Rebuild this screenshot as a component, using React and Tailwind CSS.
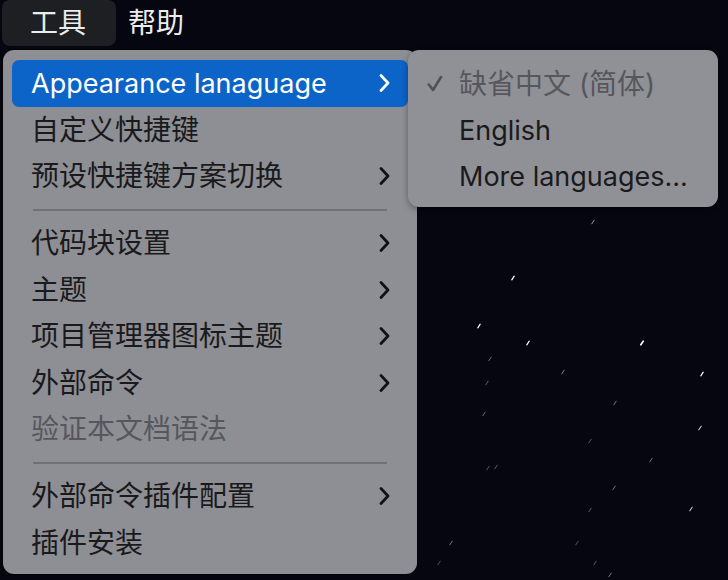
import React from "react";

const FONT = { fontFamily: '"Inter", "Noto Sans CJK SC", sans-serif' };

function Chevron({ color = "#1b1b1d" }) {
  return (
    <svg width="12" height="18" viewBox="0 0 12 18" className="shrink-0">
      <polyline points="3,1.5 10,9 3,16.5" fill="none" stroke={color} strokeWidth="2.7" strokeLinecap="round" strokeLinejoin="round" />
    </svg>
  );
}

function Row({ label, sub, active, disabled, latin }) {
  return (
    <div
      className={
        "h-[46.5px] flex items-center justify-between pl-[19px] pr-[18px] rounded-[7px] " +
        (latin ? "text-[27px] " : "text-[28px] ") +
        (active ? "bg-[#0c63c8] text-white" : disabled ? "text-[#56575c]" : "text-[#1a1a1c]")
      }
    >
      <span className="leading-none">{label}</span>
      {sub && <Chevron color={active ? "#ffffff" : "#111113"} />}
    </div>
  );
}

function Sep() {
  return (
    <div className="h-[20.5px] flex items-center px-[21px]">
      <div className="h-[2px] w-full bg-[#707176]" />
    </div>
  );
}

const stars = [
  [593, 222, 1, 0.6], [513, 278, 1.3, 1], [479, 326, 1.2, 1], [528, 343, 1.2, 1], [642, 343, 1.6, 1],
  [702, 374, 1.2, 1], [563, 372, 1, 0.5], [490, 359, 1, 0.4], [487, 383, 1, 0.35], [484, 414, 1, 0.4],
  [615, 403, 1, 0.45], [700, 428, 1.1, 0.8], [590, 441, 1, 0.35], [651, 460, 1, 0.45], [614, 488, 1, 0.45],
  [691, 509, 1.1, 0.8], [590, 510, 1, 0.35], [451, 543, 1, 0.45], [577, 543, 1, 0.3], [595, 563, 1, 0.35],
  [610, 575, 1, 0.45], [488, 468, 1, 0.3], [496, 467, 1, 0.35], [439, 563, 1, 0.3],
];

export default function App() {
  return (
    <div className="relative w-[728px] h-[580px] overflow-hidden bg-[#05060f]" style={FONT}>
      <svg className="absolute inset-0" width="728" height="580">
        {stars.map(([x, y, w, o], i) => (
          <line key={i} x1={x - 1.2} y1={y + 1.8} x2={x + 1.2} y2={y - 1.8} stroke="#ffffff" strokeOpacity={o} strokeWidth={w} strokeLinecap="round" />
        ))}
      </svg>

      <div className="relative flex items-center h-[46px] text-[28px] text-[#ececec]">
        <div className="ml-[2px] h-[46px] w-[114px] rounded-[8px] bg-[#1e1f23] flex items-center pl-[28px]">
          <span className="leading-none">工具</span>
        </div>
        <div className="ml-[12px] leading-none">帮助</div>
      </div>

      <div className="relative ml-[3px] mt-[4px] w-[414px] h-[524px] rounded-[11px] bg-[#8e8f94] pt-[10px] pb-[8px] px-[9px] shadow-[0_0_0_1px_rgba(0,0,0,0.35)]">
        <Row label="Appearance lanaguage" sub active latin />
        <Row label="自定义快捷键" />
        <Row label="预设快捷键方案切换" sub />
        <Sep />
        <Row label="代码块设置" sub />
        <Row label="主题" sub />
        <Row label="项目管理器图标主题" sub />
        <Row label="外部命令" sub />
        <Row label="验证本文档语法" disabled />
        <Sep />
        <Row label="外部命令插件配置" sub />
        <Row label="插件安装" />
      </div>

      <div className="absolute left-[408px] top-[50px] w-[310px] h-[157px] rounded-[11px] bg-[#909196] pt-[10.5px] shadow-[0_2px_6px_rgba(0,0,0,0.35)]">
        <div className="h-[46.5px] flex items-center text-[#56575c] text-[28px]">
          <div className="w-[51px] flex pl-[19px]">
            <svg width="16" height="17" viewBox="0 0 16 17">
              <polyline points="1.8,9.5 6,15 14,2" fill="none" stroke="#505156" strokeWidth="2.6" strokeLinecap="round" strokeLinejoin="round" />
            </svg>
          </div>
          <span className="leading-none">缺省中文 (简体)</span>
        </div>
        <div className="h-[46.5px] flex items-center pl-[51px] text-[#1a1a1c] text-[27px]">
          <span className="leading-none">English</span>
        </div>
        <div className="h-[46.5px] flex items-center pl-[51px] text-[#1a1a1c] text-[27px]">
          <span className="leading-none">More languages...</span>
        </div>
      </div>
    </div>
  );
}
